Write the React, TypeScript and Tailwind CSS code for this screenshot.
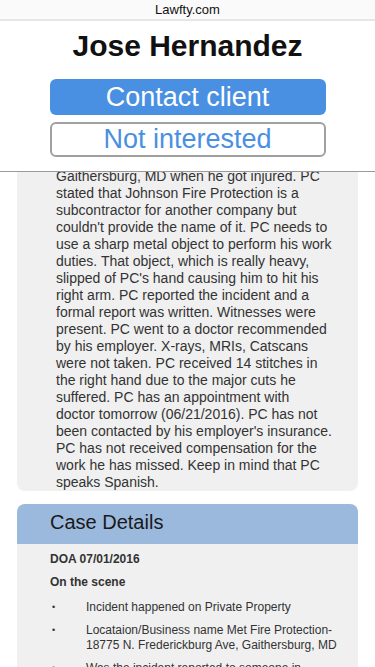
import React from 'react';

const font = { fontFamily: '"Liberation Sans", Arial, Helvetica, sans-serif' };

const scene = [
  'Incident happened on Private Property',
  'Locataion/Business name Met Fire Protection-18775 N. Frederickburg Ave, Gaithersburg, MD',
  'Was the incident reported to someone in charge? Yes',
  'Was a formal report written? Yes',
];

const App: React.FC = () => {
  return (
    <div className="w-[375px] h-[667px] overflow-hidden bg-white" style={font}>
      {/* browser address bar */}
      <div className="h-[19px] bg-[#fafafa] flex items-center justify-center text-[13px] leading-none text-[#111] border-b-2 border-[#e6e6e6] box-content">
        Lawfty.com
      </div>

      {/* client header */}
      <div className="h-[151px] border-b border-[#9a9a9a] flex flex-col items-center">
        <h1 className="mt-[10px] text-[30px] leading-[30px] font-bold text-[#111]">Jose Hernandez</h1>
        <button className="mt-[18px] w-[276px] h-[36px] rounded-[6px] bg-[#4a90e2] text-white text-[27px] leading-none">
          Contact client
        </button>
        <button className="mt-[7px] w-[276px] h-[35px] rounded-[6px] border-2 border-[#a0a0a0] bg-white text-[#4a90e2] text-[27px] leading-none">
          Not interested
        </button>
      </div>

      {/* description */}
      <div className="mx-[17px] bg-[#f0f0f0] rounded-b-[8px] overflow-hidden pl-[39px] pr-[23px]">
        <p className="-mt-[4px] text-[14px] leading-[17px] text-[#333]">
          Gaithersburg, MD when he got injured. PC stated that Johnson Fire Protection is a
          subcontractor for another company but couldn't provide the name of it. PC needs to
          use a sharp metal object to perform his work duties. That object, which is really heavy,
          slipped of PC's hand causing him to hit his right arm. PC reported the incident and a
          formal report was written. Witnesses were present. PC went to a doctor recommended by
          his employer. X-rays, MRIs, Catscans were not taken. PC received 14 stitches in the
          right hand due to the major cuts he suffered. PC has an appointment with
          <br />
          doctor tomorrow (06/21/2016). PC has not been contacted by his employer's insurance. PC has
          not received compensation for the work he has missed. Keep in mind that PC speaks
          Spanish.
        </p>
      </div>

      {/* case details */}
      <div className="mx-[17px] mt-[13px] rounded-[8px] overflow-hidden bg-[#f0f0f0]">
        <div className="h-[40px] bg-[#9bb9dd] flex items-center pl-[33px] pb-[4px] text-[20px] text-[#1a1a1a]">
          Case Details
        </div>
        <div className="pl-[33px] pr-[15px] pt-[8px] pb-4 text-[12px] leading-[15px] text-[#333]">
          <div className="font-bold">DOA 07/01/2016</div>
          <div className="font-bold mt-[8px]">On the scene</div>
          <ul className="mt-[10px] space-y-[8px]">
            {scene.map((s, i) => (
              <li key={i} className="flex">
                <span className="w-[36px] shrink-0 pl-[2px] text-[9px]">•</span>
                <span>{s}</span>
              </li>
            ))}
          </ul>
        </div>
      </div>
    </div>
  );
};

export default App;
